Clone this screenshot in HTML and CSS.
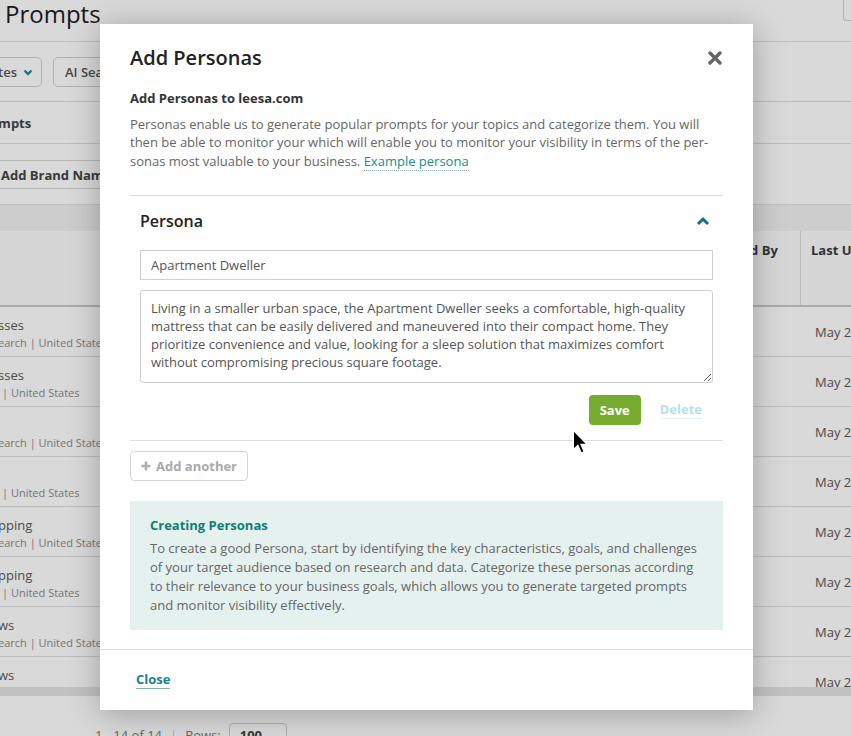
FILE: index.html
```html
<!DOCTYPE html>
<html lang="en">
<head>
    <meta charset="UTF-8">
    <meta name="viewport" content="width=device-width, initial-scale=1.0">
    <title>Prompts - Add Personas</title>
<link rel="stylesheet" href="styles.css">
</head>
<body>
    <div class="page">
        <div class="topbar">
            <h1>Prompts</h1>
            <div class="top-btn"></div>
        </div>
        <div class="filters">
            <button class="filter first">United States
                <svg width="10" height="7" viewBox="0 0 10 7"><polyline points="1.5,1.5 5,5 8.5,1.5" fill="none" stroke="#1a8f99" stroke-width="2.4"/></svg>
            </button>
            <button class="filter">AI Search</button>
        </div>
        <div class="tabs"><span class="tab">Prompts</span></div>
        <div class="brand">
            <button class="brand-btn">Add Brand Name</button>
        </div>

        <div class="table-wrap">
            <div class="table">
                <div class="table-bar"></div>
                <div class="thead">
                    <div class="c-name"></div>
                    <div class="c-mid"></div>
                    <div class="c-by">Added By</div>
                    <div class="c-date">Last Updated</div>
                </div>
                <div class="rows">
                    <div class="row">
                        <div class="c-name"><div class="r-title">sses</div><div class="r-sub">earch | United States</div></div>
                        <div class="c-mid"></div>
                        <div class="c-by"></div>
                        <div class="c-date">May 22, 2025</div>
                    </div>
                    <div class="row">
                        <div class="c-name"><div class="r-title">sses</div><div class="r-sub sub-b">| United States</div></div>
                        <div class="c-mid"></div>
                        <div class="c-by"></div>
                        <div class="c-date">May 22, 2025</div>
                    </div>
                    <div class="row">
                        <div class="c-name"><div class="r-title"></div><div class="r-sub">earch | United States</div></div>
                        <div class="c-mid"></div>
                        <div class="c-by">Agent</div>
                        <div class="c-date">May 22, 2025</div>
                    </div>
                    <div class="row">
                        <div class="c-name"><div class="r-title"></div><div class="r-sub sub-b">| United States</div></div>
                        <div class="c-mid"></div>
                        <div class="c-by">Agent</div>
                        <div class="c-date">May 22, 2025</div>
                    </div>
                    <div class="row">
                        <div class="c-name"><div class="r-title">pping</div><div class="r-sub">earch | United States</div></div>
                        <div class="c-mid"></div>
                        <div class="c-by">Agent</div>
                        <div class="c-date">May 22, 2025</div>
                    </div>
                    <div class="row">
                        <div class="c-name"><div class="r-title">pping</div><div class="r-sub sub-b">| United States</div></div>
                        <div class="c-mid"></div>
                        <div class="c-by">Agent</div>
                        <div class="c-date">May 22, 2025</div>
                    </div>
                    <div class="row">
                        <div class="c-name"><div class="r-title">ws</div><div class="r-sub">earch | United States</div></div>
                        <div class="c-mid"></div>
                        <div class="c-by"></div>
                        <div class="c-date">May 22, 2025</div>
                    </div>
                    <div class="row">
                        <div class="c-name"><div class="r-title">ws</div><div class="r-sub sub-b">| United States</div></div>
                        <div class="c-mid"></div>
                        <div class="c-by"></div>
                        <div class="c-date">May 22, 2025</div>
                    </div>
                </div>
                <div class="hscroll"></div>
            </div>
        </div>

        <div class="pager">
            <span>1 - 14 of 14</span>
            <span class="sep">|</span>
            <span>Rows:</span>
            <span class="rows-select">100 ⌄</span>
        </div>
    </div>

    <!-- dimmed backdrop -->
    <div class="overlay"></div>

    <div class="modal">
        <div class="modal-body">
            <div class="modal-head">
                <h2>Add Personas</h2>
                <button class="x-btn" aria-label="Close">
                    <svg width="14" height="14" viewBox="0 0 14 14"><path d="M2 2 L12 12 M12 2 L2 12" stroke="#666" stroke-width="3.4" stroke-linecap="round"/></svg>
                </button>
            </div>
            <h3 class="sub">Add Personas to leesa.com</h3>
            <p class="intro">Personas enable us to generate popular prompts for your topics and categorize them. You will then be able to monitor your which will enable you to monitor your visibility in terms of the per&shy;sonas most valuable to your business. <a href="#" class="dotted">Example persona</a></p>

            <div class="persona">
                <div class="persona-head">
                    <span>Persona</span>
                    <svg width="14" height="10" viewBox="0 0 14 10"><polyline points="2,8 7,3 12,8" fill="none" stroke="#13727b" stroke-width="3"/></svg>
                </div>
                <input class="field" type="text" value="Apartment Dweller">
                <textarea class="field area">Living in a smaller urban space, the Apartment Dweller seeks a comfortable, high-quality mattress that can be easily delivered and maneuvered into their compact home. They prioritize convenience and value, looking for a sleep solution that maximizes comfort without compromising precious square footage.</textarea>
                <div class="actions">
                    <button class="save">Save</button>
                    <a href="#" class="delete">Delete</a>
                </div>
            </div>

            <button class="add-btn">
                <svg width="10" height="10" viewBox="0 0 10 10"><path d="M5 0.5 V9.5 M0.5 5 H9.5" stroke="#b0b0b0" stroke-width="2.6"/></svg>
                Add another
            </button>

            <div class="tip">
                <h4>Creating Personas</h4>
                <p>To create a good Persona, start by identifying the key characteristics, goals, and challenges of your target audience based on research and data. Categorize these personas according to their relevance to your business goals, which allows you to generate targeted prompts and monitor visibility effectively.</p>
            </div>
        </div>
        <div class="modal-foot">
            <a href="#" class="close-link">Close</a>
        </div>
    </div>

    <svg class="cursor" width="17" height="26" viewBox="0 0 13 20">
        <path d="M1 1 L1 16 L4.5 12.6 L7 18.5 L9.3 17.5 L6.9 11.8 L11.6 11.8 Z" fill="#000" stroke="#fff" stroke-width="1"/>
    </svg>
</body>
</html>
```

FILE: styles.css
```css
body {
    margin: 0;
    width: 851px;
    height: 736px;
    overflow: hidden;
    position: relative;
    font-family: "Open Sans", "DejaVu Sans", sans-serif;
    background-color: #fff;
    color: #555;
}
button {
    font-family: inherit;
}

/* page behind the dialog */
.page {
    width: 851px;
}
.topbar {
    display: flex;
    justify-content: space-between;
    height: 41px;
    border-bottom: 1px solid #dedede;
}
.topbar h1 {
    margin: 0;
    padding-left: 5px;
    font-size: 24px;
    font-weight: 500;
    line-height: 27px;
    color: #1e1e1e;
}
.top-btn {
    width: 24px;
    height: 20px;
    margin-right: -18px;
    border: 1px solid #d0d0d0;
    border-top: 0;
    border-radius: 0 0 4px 4px;
}
.filters {
    display: flex;
    gap: 11px;
    padding: 15px 0 14px;
    border-bottom: 1px solid #dedede;
}
.filter {
    flex-shrink: 0;
    height: 30px;
    display: flex;
    align-items: center;
    gap: 8px;
    padding: 0 11px;
    border: 1px solid #d2d2d2;
    border-radius: 5px;
    background: #fff;
    font-size: 13px;
    font-weight: 600;
    color: #555;
    white-space: nowrap;
}
.filter.first {
    margin-left: -88px;
    width: 130px;
    gap: 6px;
    padding-right: 8px;
    justify-content: flex-end;
}
.filter:last-child {
    width: 140px;
}
.tabs {
    height: 41px;
    border-bottom: 1px solid #dedede;
    line-height: 41px;
}
.tab {
    display: inline-block;
    margin-left: -24px;
    font-size: 13px;
    font-weight: 700;
    color: #444;
}
.brand {
    padding: 16px 0 15px;
}
.brand-btn {
    height: 29px;
    margin-left: -12px;
    width: 160px;
    padding: 0 12px;
    text-align: left;
    border: 1px solid #d6d6d6;
    border-radius: 4px;
    background: #fff;
    font-size: 13px;
    font-weight: 700;
    color: #444;
    white-space: nowrap;
}

.table-wrap {
    overflow: hidden;
}
.table {
    width: 1100px;
}
.table-bar {
    height: 26px;
    background-color: #f1f1f1;
    border-top: 1px solid #e2e2e2;
}
.thead {
    display: flex;
    height: 74px;
    border-bottom: 2px solid #c9c9c9;
    background-color: #fcfcfc;
    font-size: 13px;
    font-weight: 700;
    color: #3a3a3a;
}
.thead > div {
    padding-top: 10px;
    box-sizing: border-box;
}
.thead .c-date {
    padding-left: 10px;
    border-left: 1px solid #dedede;
}
.c-name {
    width: 100px;
    overflow: hidden;
    white-space: nowrap;
}
.c-mid {
    width: 617px;
}
.c-by {
    width: 83px;
    white-space: nowrap;
    font-size: 13px;
}
.c-date {
    width: 200px;
    padding-left: 15px;
    white-space: nowrap;
    font-size: 13px;
}
.rows {
    height: 380px;
    overflow: hidden;
}
.row {
    display: flex;
    align-items: center;
    height: 49px;
    border-bottom: 1px solid #dedede;
    color: #585858;
}
.row .c-name {
    align-self: flex-start;
    padding-top: 9px;
}
.r-title {
    height: 18px;
    line-height: 18px;
    font-size: 13px;
    margin-left: -2px;
    color: #5a5a5a;
}
.r-sub {
    line-height: 18px;
    font-size: 11px;
    margin-left: -2px;
    color: #8a8a8a;
}
.r-sub.sub-b {
    margin-left: 2px;
}
.hscroll {
    height: 9px;
    background-color: #e3e3e3;
    border-bottom: 3px solid #fff;
    box-shadow: 0 1px 0 #dedede;
}
.pager {
    display: flex;
    align-items: center;
    gap: 8px;
    padding: 24px 0 0 95px;
    font-size: 13px;
    color: #777;
}
.pager .sep {
    color: #ccc;
}
.rows-select {
    border: 1px solid #ccc;
    border-radius: 4px;
    padding: 2px 10px;
    font-weight: 700;
    color: #444;
}

.overlay {
    position: absolute;
    inset: 0;
    background-color: rgba(0, 0, 0, 0.15);
}

/* dialog */
.modal {
    position: absolute;
    left: 100px;
    top: 24px;
    width: 653px;
    height: 686px;
    display: flex;
    flex-direction: column;
    background-color: #fff;
    box-shadow: 0 4px 30px rgba(0, 0, 0, 0.28);
    color: #333;
}
.modal-body {
    flex: 1;
    padding: 20px 30px 0;
}
.modal-head {
    display: flex;
    justify-content: space-between;
    align-items: center;
    margin-bottom: 17px;
}
.modal-head h2 {
    margin: 0;
    font-size: 20px;
    font-weight: 600;
    line-height: 28px;
    color: #222;
}
.x-btn {
    border: 0;
    background: none;
    padding: 0;
    margin-right: 1px;
    height: 14px;
    display: flex;
}
.sub {
    margin: 0 0 8px;
    font-size: 13px;
    font-weight: 700;
    line-height: 18px;
    color: #333;
}
.intro {
    margin: 0 0 25px;
    font-size: 13px;
    line-height: 18.3px;
    color: #666;
}
.dotted {
    color: #218a93;
    text-decoration: none;
    border-bottom: 1px dotted #8ab;
}

.persona {
    border-top: 1px solid #dcdcdc;
    border-bottom: 1px solid #dcdcdc;
    padding: 14px 10px 15px;
}
.persona-head {
    display: flex;
    justify-content: space-between;
    align-items: center;
    height: 22px;
    margin-bottom: 18px;
    font-size: 16px;
    font-weight: 600;
    color: #222;
}
.persona-head svg {
    margin-right: 3px;
}
.field {
    display: block;
    width: 100%;
    box-sizing: border-box;
    border: 1px solid #cfcfcf;
    font-family: inherit;
    font-size: 13px;
    color: #555;
}
input.field {
    height: 30px;
    padding: 0 10px;
}
.area {
    height: 93px;
    margin-top: 10px;
    padding: 8px 10px;
    line-height: 18px;
    border-radius: 3px;
    resize: vertical;
}
.actions {
    display: flex;
    justify-content: flex-end;
    align-items: center;
    gap: 19px;
    margin-top: 12px;
    padding-right: 11px;
}
.save {
    height: 30px;
    width: 52px;
    border: 0;
    border-radius: 4px;
    background-color: #77ad2f;
    color: #fff;
    font-size: 13px;
    font-weight: 700;
}
.delete {
    font-size: 13px;
    font-weight: 700;
    color: #b5e2ea;
    text-decoration: none;
    border-bottom: 1px solid #dff2f5;
    line-height: 17px;
}

.add-btn {
    display: flex;
    align-items: center;
    gap: 5px;
    margin-top: 10px;
    height: 30px;
    padding: 0 10px;
    border: 1px solid #d5d5d5;
    border-radius: 4px;
    background: #fff;
    font-size: 13px;
    font-weight: 700;
    color: #aaa;
}

.tip {
    margin-top: 20px;
    padding: 15px 14px 15px 20px;
    background-color: #e5f1ee;
}
.tip h4 {
    margin: 0 0 5px;
    font-size: 13px;
    font-weight: 700;
    line-height: 18px;
    color: #0f7e74;
}
.tip p {
    margin: 0;
    font-size: 13px;
    line-height: 19px;
    color: #666;
}

.modal-foot {
    height: 60px;
    border-top: 1px solid #dcdcdc;
    display: flex;
    align-items: center;
    padding-left: 36px;
}
.close-link {
    font-size: 13px;
    font-weight: 700;
    color: #1b7f89;
    text-decoration: none;
    border-bottom: 1px solid #7fb5bb;
    line-height: 17px;
}

.cursor {
    position: absolute;
    left: 572px;
    top: 429px;
}
```
